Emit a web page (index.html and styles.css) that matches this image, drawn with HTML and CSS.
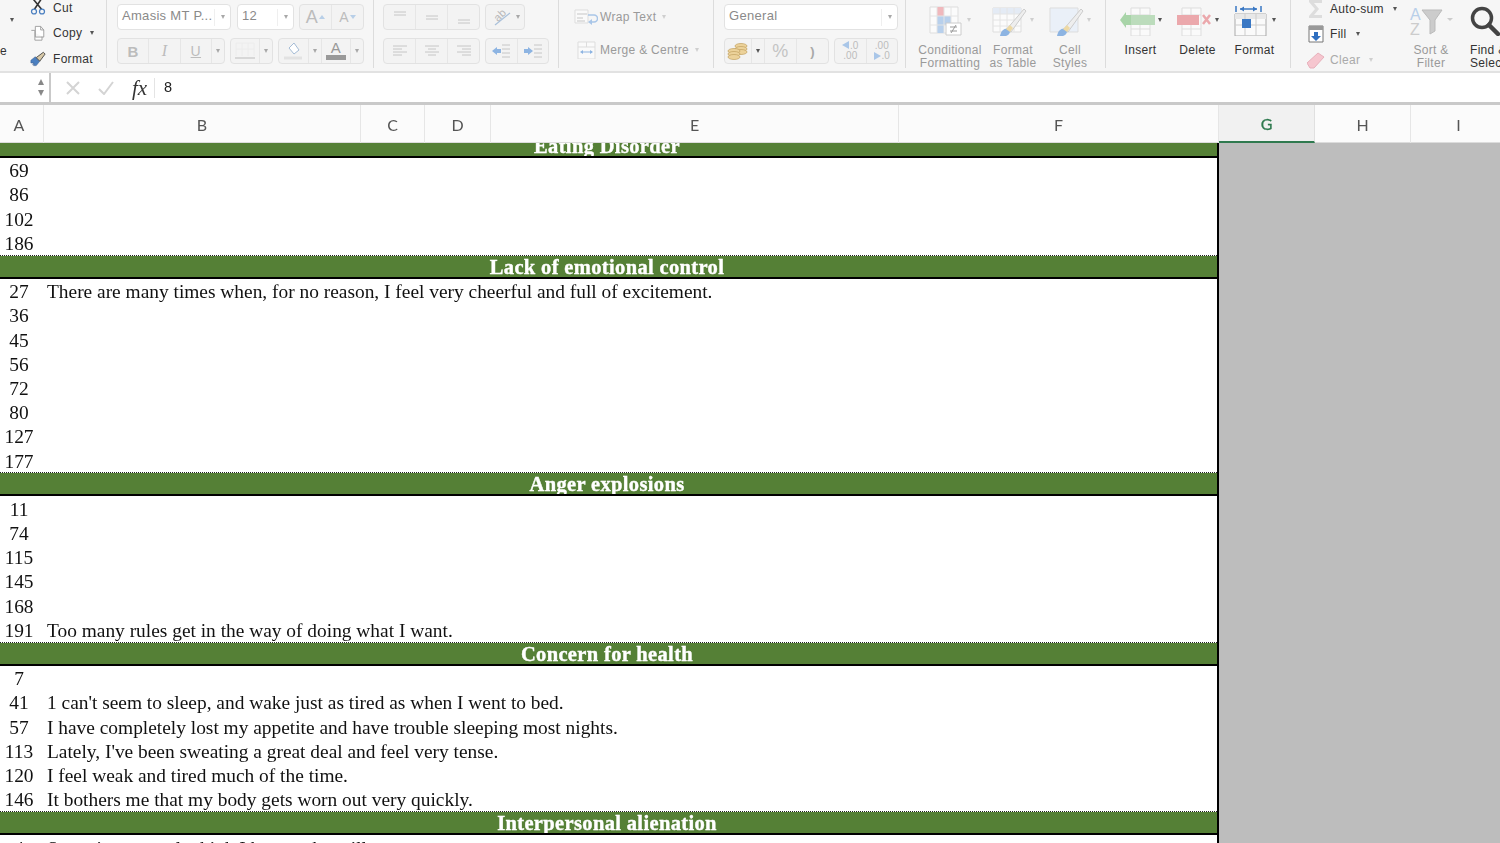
FILE: index.html
```html
<!DOCTYPE html>
<html lang="en">
<head>
<meta charset="utf-8">
<title>Workbook</title>
<link rel="stylesheet" href="styles.css">
</head>
<body>
<div class="app">
  <div class="ribbon">
    <div class="group g-clip">
      <div class="paste"><span class="paste-e">e</span><i class="caret dark"></i></div>
      <div class="clip-stack">
        <div class="clip-row">
          <svg class="clip-ico" viewBox="0 0 18 18"><path d="M4 0l9 11M13 -1L5 11" stroke="#333" stroke-width="1.8" fill="none"/><circle cx="4.5" cy="13.5" r="2.8" fill="none" stroke="#4a7fc0" stroke-width="1.4"/><circle cx="13.5" cy="13.5" r="2.8" fill="none" stroke="#4a7fc0" stroke-width="1.4"/></svg>
          <span>Cut</span>
        </div>
        <div class="clip-row">
          <svg class="clip-ico" viewBox="0 0 18 18"><path d="M1.500 5.500h4v11h8v-4M6 1h6l3.500 4v8H6z" fill="#fff" stroke="#999"/><path d="M12 1v4h3.500" fill="none" stroke="#999"/></svg>
          <span>Copy</span><i class="caret dark small-gap"></i>
        </div>
        <div class="clip-row">
          <svg class="clip-ico" viewBox="0 0 18 18"><path d="M1 11l5-4 5 5-4 5H4l1-2-2 1 1-2-3 0z" fill="#4a7fc0" stroke="#3a5f90" stroke-width=".6"/><path d="M7 8l8-6 2 2-6 8z" fill="#d8c9a8" stroke="#444"/></svg>
          <span>Format</span>
        </div>
      </div>
    </div>

    <div class="group g-font">
      <div class="tool-row">
        <div class="ctl field w-font"><span class="field-text">Amasis MT P...</span><i class="divider"></i><i class="caret"></i></div>
        <div class="ctl field w-size"><span class="field-text">12</span><i class="divider"></i><i class="caret"></i></div>
        <div class="ctl seg w-grow">
          <span class="cell glyph-a big">A<i class="tri up"></i></span>
          <span class="cell glyph-a">A<i class="tri down"></i></span>
        </div>
      </div>
      <div class="tool-row">
        <div class="ctl seg w-biu">
          <span class="cell style-b">B</span><span class="cell style-i">I</span><span class="cell style-u">U</span><span class="cell narrow"><i class="caret"></i></span>
        </div>
        <div class="ctl seg w-border">
          <span class="cell"><svg class="ico-24" viewBox="0 0 24 20"><path d="M3 2v13M9 2v13M15 2v13M21 2v13M3 2h18M3 8h18" stroke="#ececec" fill="none"/><path d="M2 17h20" stroke="#c4c4c4" stroke-width="1.200"/></svg></span><span class="cell narrow"><i class="caret"></i></span>
        </div>
        <div class="ctl seg w-fill">
          <span class="cell"><svg class="ico-24" viewBox="0 0 24 20"><path d="M8 7l5-5 5 7-5 4z" fill="#fff" stroke="#a5bcd6"/><path d="M3 17h18" stroke="#e2e2e2" stroke-width="3"/></svg></span><span class="cell narrow"><i class="caret"></i></span>
          <span class="cell"><svg class="ico-24" viewBox="0 0 24 20"><text class="ico-letter" x="12" y="12" text-anchor="middle">A</text><path d="M2 16.500h20" stroke="#999" stroke-width="5"/></svg></span><span class="cell narrow"><i class="caret"></i></span>
        </div>
      </div>
    </div>

    <div class="group g-align">
      <div class="tool-row">
        <div class="ctl seg w-align">
          <span class="cell"><svg class="ico-18" viewBox="0 0 18 16"><path d="M3 3h12M3 6h12" stroke="#c6c6c6"/></svg></span>
          <span class="cell"><svg class="ico-18" viewBox="0 0 18 16"><path d="M3 7h12M3 10h12" stroke="#c6c6c6"/></svg></span>
          <span class="cell"><svg class="ico-18" viewBox="0 0 18 16"><path d="M3 11h12M3 14h12" stroke="#c6c6c6"/></svg></span>
        </div>
        <div class="ctl seg w-orient">
          <span class="cell orient"><svg class="ico-24" viewBox="0 0 24 20"><text class="ico-ab" x="3" y="12" transform="rotate(-45 9 9)">ab</text><path d="M4 18L19 6" stroke="#a9c0da" stroke-width="1.200"/></svg><i class="caret"></i></span>
        </div>
      </div>
      <div class="tool-row">
        <div class="ctl seg w-align">
          <span class="cell"><svg class="ico-18" viewBox="0 0 18 16"><path d="M2 3h14M2 6h9M2 9h14M2 12h9" stroke="#c6c6c6"/></svg></span>
          <span class="cell"><svg class="ico-18" viewBox="0 0 18 16"><path d="M2 3h14M5 6h8M2 9h14M5 12h8" stroke="#c6c6c6"/></svg></span>
          <span class="cell"><svg class="ico-18" viewBox="0 0 18 16"><path d="M2 3h14M7 6h9M2 9h14M7 12h9" stroke="#c6c6c6"/></svg></span>
        </div>
        <div class="ctl seg w-indent">
          <span class="cell"><svg class="ico-24" viewBox="0 0 24 18"><path d="M3 9l5-4v8z" fill="#8db4e2"/><path d="M8 7h4v4H8z" fill="#8db4e2"/><path d="M13 3h8M13 7h8M13 11h8M13 15h8" stroke="#c6c6c6"/></svg></span>
          <span class="cell"><svg class="ico-24" viewBox="0 0 24 18"><path d="M12 9L7 5v8z" fill="#8db4e2"/><path d="M3 7h4v4H3z" fill="#8db4e2"/><path d="M13 3h8M13 7h8M13 11h8M13 15h8" stroke="#c6c6c6"/></svg></span>
        </div>
      </div>
    </div>

    <div class="group g-wrap">
      <div class="wrap-row">
        <svg class="ico-wrap" viewBox="0 0 24 18"><path d="M1 2h13v13H1z" fill="#fafafa" stroke="#ddd"/><path d="M3 6h10M3 10h6M3 13h8" stroke="#c6c6c6"/><path d="M14 7h6a3 3 0 0 1 0 7h-3" fill="none" stroke="#a9c6e8" stroke-width="1.500"/><path d="M18 11l-4 3 4 3z" fill="#a9c6e8"/></svg>
        <span>Wrap Text</span><i class="caret faint"></i>
      </div>
      <div class="wrap-row">
        <svg class="ico-wrap" viewBox="0 0 24 18"><path d="M4 1h17v17H4zM4 6h17M12.500 1v5" fill="#fafafa" stroke="#ddd"/><path d="M8 11h10" stroke="#8db4e2"/><path d="M6 11l3-2v4zM19 11l-3-2v4z" fill="#8db4e2"/></svg>
        <span>Merge &amp; Centre</span><i class="caret faint"></i>
      </div>
    </div>

    <div class="group g-number">
      <div class="ctl field w-general"><span class="field-text">General</span><i class="divider"></i><i class="caret"></i></div>
      <div class="tool-row">
        <div class="ctl seg w-money">
          <span class="cell coins"><svg class="ico-24" viewBox="0 0 24 18"><g fill="#ecd29a" stroke="#c2a060" stroke-width=".7"><ellipse cx="15" cy="4" rx="6" ry="2.500"/><ellipse cx="15" cy="7" rx="6" ry="2.500"/><ellipse cx="15" cy="10" rx="6" ry="2.500"/><ellipse cx="8" cy="9" rx="6" ry="2.500"/><ellipse cx="8" cy="12" rx="6" ry="2.500"/><ellipse cx="8" cy="15" rx="6" ry="2.500"/></g></svg></span>
          <span class="cell narrow"><i class="caret dark"></i></span>
          <span class="cell percent">%</span>
          <span class="cell comma">)</span>
        </div>
        <div class="ctl seg w-decimals">
          <span class="cell dec"><span class="dec-top"><i class="arrow left"></i>.0</span><span>.00</span></span>
          <span class="cell dec"><span>.00</span><span class="dec-top"><i class="arrow right"></i>.0</span></span>
        </div>
      </div>
    </div>

    <div class="group g-styles">
      <div class="big-tool w-cond">
        <div class="big-ico">
          <svg class="ico-big" viewBox="0 0 36 30"><path d="M1 1h28v26H1z" fill="#fbfbfb" stroke="#ddd"/><path d="M8 1h7v9H8z" fill="#f0b8bc"/><path d="M8 10h14v9H8z" fill="#b8d0ec"/><path d="M8 19h7v8H8z" fill="#b8d0ec"/><path d="M8 1v26M15 1v26M22 1v26M1 10h28M1 19h28" stroke="#e4e4e4"/><path d="M17 17h15v12H17z" fill="#fff" stroke="#ccc"/><path d="M21 21h7M21 25h7M27 19l-5 8" stroke="#999"/></svg>
          <i class="caret faint"></i>
        </div>
        <div class="big-label">Conditional<br>Formatting</div>
      </div>
      <div class="big-tool w-table">
        <div class="big-ico">
          <svg class="ico-big" viewBox="0 0 36 30"><path d="M1 2h28v24H1z" fill="#fbfbfb" stroke="#ddd"/><path d="M1 2h28v6H1z" fill="#e4ebf5"/><path d="M8 2v24M15 2v24M22 2v24M1 8h28M1 14h28M1 20h28" stroke="#e4e4e4"/><path d="M14 24L32 3l2 2-15 21z" fill="#eee" stroke="#ccc"/><path d="M8 30c1-6 5-9 10-7 1 3-1 6-4 7z" fill="#8db4e2"/><path d="M14 23l4-4 3 3-3 4z" fill="#edd9a5"/></svg>
          <i class="caret faint"></i>
        </div>
        <div class="big-label">Format<br>as Table</div>
      </div>
      <div class="big-tool w-cell">
        <div class="big-ico">
          <svg class="ico-big" viewBox="0 0 36 30"><path d="M1 2h28v24H1z" fill="#eaf0f8" stroke="#ddd"/><path d="M14 24L32 3l2 2-15 21z" fill="#eee" stroke="#ccc"/><path d="M8 30c1-6 5-9 10-7 1 3-1 6-4 7z" fill="#8db4e2"/><path d="M14 23l4-4 3 3-3 4z" fill="#edd9a5"/></svg>
          <i class="caret faint"></i>
        </div>
        <div class="big-label">Cell<br>Styles</div>
      </div>
    </div>

    <div class="group g-cells">
      <div class="big-tool w-cells">
        <div class="big-ico">
          <svg class="ico-cells" viewBox="0 0 36 30"><path d="M11 2h19v28H11zM11 9h19M11 23h19M20 2v28" fill="#fafafa" stroke="#ddd"/><path d="M11 9h24v10H11z" fill="#bcdcbc"/><path d="M11 9l-5 0 0-3-6 8 6 8 0-3 5 0z" fill="#a8d4a8"/></svg>
          <i class="caret dark"></i>
        </div>
        <div class="big-label strong">Insert</div>
      </div>
      <div class="big-tool w-cells">
        <div class="big-ico">
          <svg class="ico-cells" viewBox="0 0 36 30"><path d="M5 2h19v28H5zM5 9h19M5 23h19M14 2v28" fill="#fafafa" stroke="#ddd"/><path d="M0 9h22v10H0z" fill="#eba8ac"/><path d="M26 9l7 9M33 9l-7 9" stroke="#eba8ac" stroke-width="2.500"/></svg>
          <i class="caret dark"></i>
        </div>
        <div class="big-label strong">Delete</div>
      </div>
      <div class="big-tool w-cells">
        <div class="big-ico">
          <svg class="ico-cells" viewBox="0 0 36 30"><path d="M2 0v6M27 0v6M6 3h17" stroke="#3a78c4" stroke-width="1.500"/><path d="M6 3l4-2.500v5zM23 3l-4-2.500v5z" fill="#3a78c4"/><path d="M1 8h31v22H1z" fill="#fafafa" stroke="#aaa"/><path d="M1 8h31v5H1z" fill="#e8e8e8"/><path d="M11 8v22M22 8v22M1 19h31" stroke="#ccc"/><path d="M8 13h9v9H8z" fill="#3a78c4"/></svg>
          <i class="caret dark"></i>
        </div>
        <div class="big-label strong">Format</div>
      </div>
    </div>

    <div class="group g-edit">
      <div class="edit-stack">
        <div class="edit-row"><svg class="edit-ico" viewBox="0 0 18 18"><path d="M2 0h13v3H7l5 6-5 6h8v3H2v-2l6-7-6-7z" fill="#ddd"/></svg><span>Auto-sum</span><i class="caret dark"></i></div>
        <div class="edit-row"><svg class="edit-ico" viewBox="0 0 18 18"><path d="M2 1h14v16H2z" fill="#fff" stroke="#777"/><path d="M2 1h14v4H2z" fill="#999"/><path d="M7 7h4v4h3l-5 5-5-5h3z" fill="#2f6fc0"/></svg><span>Fill</span><i class="caret dark"></i></div>
        <div class="edit-row muted"><svg class="edit-ico" viewBox="0 0 18 18"><path d="M0 12L11 2l6 4L7 17H3z" fill="#f6c6cf" stroke="#e7b0bb"/></svg><span>Clear</span><i class="caret faint"></i></div>
      </div>
      <div class="big-tool w-sort">
        <div class="big-ico">
          <svg class="ico-sort" viewBox="0 0 44 30"><text class="sort-a" x="1" y="14">A</text><text class="sort-z" x="1" y="29">Z</text><path d="M13 4h20l-7 10v11l-5 3V14z" fill="#ccc" stroke="#bbb"/><path d="M38 12h6l-3 3z" fill="#ccc"/></svg>
        </div>
        <div class="big-label">Sort &amp;<br>Filter</div>
      </div>
      <div class="big-tool w-find">
        <div class="big-ico left">
          <svg class="ico-find" viewBox="0 0 30 30"><circle cx="12" cy="12" r="9.500" fill="none" stroke="#444" stroke-width="3.500"/><path d="M19 19l9 9" stroke="#444" stroke-width="4.500" stroke-linecap="round"/></svg>
        </div>
        <div class="big-label strong left">Find &amp;<br>Select</div>
      </div>
    </div>
  </div>

  <div class="formula">
    <div class="namebox"><span class="spin"><i class="tri-spin up"></i><i class="tri-spin down"></i></span></div>
    <div class="formula-tools">
      <svg class="fx-mark" viewBox="0 0 14 14"><path d="M1 1l12 12M13 1L1 13" stroke="#d4d4d4" stroke-width="2"/></svg>
      <svg class="fx-mark wide" viewBox="0 0 16 14"><path d="M1 8l5 5L15 1" fill="none" stroke="#d4d4d4" stroke-width="2"/></svg>
      <span class="fx">fx</span>
    </div>
    <div class="formula-value">8</div>
  </div>

  <div class="col-head">
    <div class="col first">A</div><div class="col">B</div><div class="col">C</div><div class="col">D</div><div class="col">E</div><div class="col">F</div><div class="col active">G</div><div class="col">H</div><div class="col">I</div>
  </div>

  <div class="sheet">
    <div class="table">
      <div class="band band-clipped"><span>Eating Disorder</span></div>
      <div class="row"><span class="num">69</span></div>
      <div class="row"><span class="num">86</span></div>
      <div class="row"><span class="num">102</span></div>
      <div class="row"><span class="num">186</span></div>
      <div class="band"><span>Lack of emotional control</span></div>
      <div class="row"><span class="num">27</span><span class="txt">There are many times when, for no reason, I feel very cheerful and full of excitement.</span></div>
      <div class="row"><span class="num">36</span></div>
      <div class="row"><span class="num">45</span></div>
      <div class="row"><span class="num">56</span></div>
      <div class="row"><span class="num">72</span></div>
      <div class="row"><span class="num">80</span></div>
      <div class="row"><span class="num">127</span></div>
      <div class="row"><span class="num">177</span></div>
      <div class="band"><span>Anger explosions</span></div>
      <div class="row"><span class="num">11</span></div>
      <div class="row"><span class="num">74</span></div>
      <div class="row"><span class="num">115</span></div>
      <div class="row"><span class="num">145</span></div>
      <div class="row"><span class="num">168</span></div>
      <div class="row"><span class="num">191</span><span class="txt">Too many rules get in the way of doing what I want.</span></div>
      <div class="band"><span>Concern for health</span></div>
      <div class="row"><span class="num">7</span></div>
      <div class="row"><span class="num">41</span><span class="txt">1 can't seem to sleep, and wake just as tired as when I went to bed.</span></div>
      <div class="row"><span class="num">57</span><span class="txt">I have completely lost my appetite and have trouble sleeping most nights.</span></div>
      <div class="row"><span class="num">113</span><span class="txt">Lately, I've been sweating a great deal and feel very tense.</span></div>
      <div class="row"><span class="num">120</span><span class="txt">I feel weak and tired much of the time.</span></div>
      <div class="row"><span class="num">146</span><span class="txt">It bothers me that my body gets worn out very quickly.</span></div>
      <div class="band"><span>Interpersonal alienation</span></div>
      <div class="row"><span class="num">4</span><span class="txt">Sometimes people think I know who will</span></div>
    </div>
    <div class="outside"></div>
  </div>
</div>
</body>
</html>
```

FILE: styles.css
```css
* { box-sizing: border-box; }
html, body { margin: 0; height: 100%; overflow: hidden; background: #fff; }
i { display: block; font-style: normal; }
svg { display: block; flex: none; overflow: hidden; }

.app {
  width: 1500px;
  height: 843px;
  overflow: hidden;
  display: flex;
  flex-direction: column;
  font-family: "Liberation Sans", Arial, sans-serif;
  filter: blur(0.35px);
}

/* Ribbon */
.ribbon {
  height: 73px;
  flex: none;
  display: flex;
  align-items: flex-start;
  background: #f6f6f6;
  border-bottom: 2px solid #e2e2e2;
  font-size: 12px;
  letter-spacing: 0.3px;
  color: #9a9a9a;
  overflow: hidden;
}
.group {
  height: 68px;
  flex: none;
  border-right: 1px solid #dcdcdc;
}
.g-clip { width: 107px; display: flex; }
.g-font { width: 267px; padding: 4px 0 0 10px; }
.g-align { width: 185px; padding: 4px 0 0 9px; }
.g-wrap { width: 155px; padding: 0 0 0 15px; }
.g-number { width: 192px; padding: 4px 0 0 10px; }
.g-styles { width: 200px; padding: 6px 0 0 8px; display: flex; }
.g-cells { width: 185px; padding: 6px 0 0 6px; display: flex; }
.g-edit { width: 210px; border-right: 0; display: flex; padding-left: 16px; }

.caret {
  width: 0;
  height: 0;
  flex: none;
  border-left: 2.500px solid transparent;
  border-right: 2.500px solid transparent;
  border-top: 4px solid #a8a8a8;
}
.caret.dark { border-top-color: #555; }
.caret.faint { border-top-color: #cfcfcf; }

.paste { width: 30px; display: flex; flex-direction: column; align-items: flex-start; padding-top: 18px; }
.paste .caret { margin: 0 0 0 10px; order: -1; }
.paste-e { font-size: 12px; color: #333; margin-top: 22px; }
.clip-stack { margin-top: -5px; display: flex; flex-direction: column; flex: none; }
.clip-row { height: 25.500px; flex: none; display: flex; align-items: center; gap: 7px; color: #333; }
.clip-ico { width: 16px; height: 17px; }
.small-gap { margin-left: 1px; }

.tool-row { display: flex; gap: 5px; height: 26px; margin-bottom: 8px; }
.ctl {
  height: 26px;
  border: 1px solid #e2e2e2;
  border-radius: 4px;
  background: #f3f3f3;
  display: flex;
  align-items: center;
  flex: none;
}
.field { background: #fff; padding: 0 5px 0 4px; }
.field-text { flex: 1; font-size: 13px; line-height: 14px; letter-spacing: 0.3px; color: #8a8a8a; white-space: nowrap; margin-bottom: 2px; }
.divider { width: 1px; height: 17px; background: #efefef; margin-right: 6px; }
.w-font { width: 114px; margin-right: 1px; }
.w-size { width: 57px; }
.w-grow { width: 65px; }
.w-biu { width: 108px; }
.w-border { width: 43px; }
.w-fill { width: 86px; }
.w-align { width: 97px; }
.w-orient { width: 40px; }
.w-indent { width: 64px; }
.w-general { width: 174px; margin-bottom: 8px; }
.w-money { width: 105px; }
.w-decimals { width: 64px; }

.seg .cell {
  flex: 1 1 0;
  height: 100%;
  min-width: 0;
  display: flex;
  align-items: center;
  justify-content: center;
  border-left: 1px solid #e6e6e6;
  color: #bcbcbc;
}
.seg .cell:first-child { border-left: 0; }
.seg .cell.narrow { flex: 0 0 13px; }
.seg .cell.coins { flex: 0 0 26px; }
.glyph-a { font-size: 14px; gap: 1px; }
.glyph-a.big { font-size: 18px; }
.tri { width: 0; height: 0; border-left: 3.500px solid transparent; border-right: 3.500px solid transparent; }
.tri.up { border-bottom: 4px solid #b8cfe8; }
.tri.down { border-top: 4px solid #b8cfe8; }
.style-b { font: bold 15px "Liberation Sans", sans-serif; }
.style-i { font: italic 16px "Liberation Serif", serif; }
.style-u { font-size: 14px; text-decoration: underline; }
.orient { gap: 1px; }
.ico-24 { width: 24px; height: 20px; }
.ico-18 { width: 18px; height: 16px; }
.ico-letter { font: 15px "Liberation Sans", sans-serif; fill: #999; }
.ico-ab { font: 11px "Liberation Sans", sans-serif; fill: #b8b8b8; }

.wrap-row { display: flex; align-items: center; height: 33px; gap: 2px; white-space: nowrap; }
.wrap-row span { margin-right: 4px; }
.ico-wrap { width: 24px; height: 18px; }

.seg .percent { font-size: 18px; font-weight: normal; color: #c4c4c4; }
.seg .comma { font: bold 13px "Liberation Sans", sans-serif; color: #a8a8a8; }
.dec { flex-direction: column; font-size: 10px; line-height: 10px; letter-spacing: 0; }
.dec-top { display: flex; align-items: center; gap: 1px; }
.arrow { width: 0; height: 0; border-top: 4px solid transparent; border-bottom: 4px solid transparent; }
.arrow.left { border-right: 7px solid #a9c6e8; }
.arrow.right { border-left: 7px solid #a9c6e8; }

.big-tool { display: flex; flex-direction: column; align-items: center; flex: none; }
.w-cond { width: 72px; }
.w-table { width: 54px; }
.w-cell { width: 60px; }
.w-cells { width: 57px; }
.big-ico { height: 38px; flex: none; display: flex; gap: 2px; align-items: flex-start; }
.big-ico .caret { margin-top: 12px; }
.ico-big { width: 36px; height: 30px; }
.ico-cells { width: 36px; height: 30px; }
.big-label { text-align: center; line-height: 13px; flex: none; }
.strong { color: #333; }
.edit-stack { margin-top: -4px; width: 100px; flex: none; display: flex; flex-direction: column; }
.edit-row { height: 25.500px; flex: none; display: flex; align-items: center; gap: 5px; color: #333; }
.edit-row span { margin-right: 4px; }
.edit-row.muted { color: #aaa; }
.edit-ico { width: 18px; height: 18px; }
.w-sort { width: 46px; padding-top: 6px; margin: 0 16px 0 1px; }
.w-find { padding-top: 6px; }
.ico-sort { width: 44px; height: 30px; }
.sort-a { font: 16px "Liberation Sans", sans-serif; fill: #b9cfe9; }
.sort-z { font: 16px "Liberation Sans", sans-serif; fill: #ccc; }
.ico-find { width: 30px; height: 30px; }
.left { text-align: left; align-self: flex-start; white-space: nowrap; }

/* Formula bar */
.formula {
  height: 32px;
  flex: none;
  display: flex;
  align-items: stretch;
  background: #fff;
  border-bottom: 3px solid #c9c9c9;
}
.namebox {
  width: 51px;
  border-right: 2px solid #c9c9c9;
  display: flex;
  justify-content: flex-end;
  align-items: center;
  padding-right: 5px;
}
.spin { display: flex; flex-direction: column; gap: 5px; }
.tri-spin { width: 0; height: 0; border-left: 3.500px solid transparent; border-right: 3.500px solid transparent; }
.tri-spin.up { border-bottom: 6px solid #888; }
.tri-spin.down { border-top: 6px solid #888; }
.formula-tools {
  width: 105px;
  display: flex;
  align-items: center;
  gap: 18px;
  padding-left: 15px;
}
.fx-mark { width: 14px; height: 14px; }
.fx-mark.wide { width: 16px; }
.fx { font: italic 21px "Liberation Serif", serif; color: #333; padding-right: 7px; border-right: 1px solid #e4e4e4; line-height: 20px; }
.formula-value { font-size: 14.500px; color: #222; line-height: 29px; padding-left: 8px; }

/* Column headers */
.col-head {
  height: 38px;
  flex: none;
  display: grid;
  grid-template-columns: 44px 317px 64px 66px 408px 320px 96px 96px 96px;
  background: #fbfbfb;
  border-bottom: 1px solid #dcdcdc;
}
.col {
  display: flex;
  align-items: center;
  justify-content: center;
  border-right: 1px solid #e6e6e6;
  font: 16px Lato, "Liberation Sans", sans-serif;
  color: #555;
}
.col.first { padding-right: 5px; }
.col.active {
  background: #f1f1f1;
  color: #2f7a4f;
  -webkit-text-stroke: 0.3px #2f7a4f;
  border-bottom: 2px solid #2f7a4f;
  height: 38px;
  border-right-color: #e0e0e0;
}

/* Sheet */
.sheet {
  flex: 1;
  min-height: 0;
  display: flex;
  font: 19.400px/24.200px "Liberation Serif", "Times New Roman", serif;
  color: #111;
  overflow: hidden;
}
.table { width: 1219px; flex: none; border-right: 2px solid #000; background: #fff; }
.outside { flex: 1; background: #bdbdbd; }
.row { height: 24.200px; padding-top: 1.500px; display: flex; white-space: nowrap; }
.num { width: 38px; text-align: center; flex: none; }
.txt { margin-left: 9px; }
.band {
  height: 24.200px;
  background: #558036;
  background-clip: padding-box;
  border-top: 1px dotted #222;
  border-bottom: 2px solid #000;
  color: #fff;
  font-size: 20.500px;
  font-weight: bold;
  letter-spacing: 0.35px;
  -webkit-text-stroke: 0.4px #fff;
  text-align: center;
  line-height: 23px;
  padding-right: 3px;
  overflow: hidden;
}
.band-clipped {
  height: 14.800px;
  border-top: 0;
  display: flex;
  align-items: flex-end;
  justify-content: center;
}
.band-clipped span { margin-bottom: -2px; }
```
